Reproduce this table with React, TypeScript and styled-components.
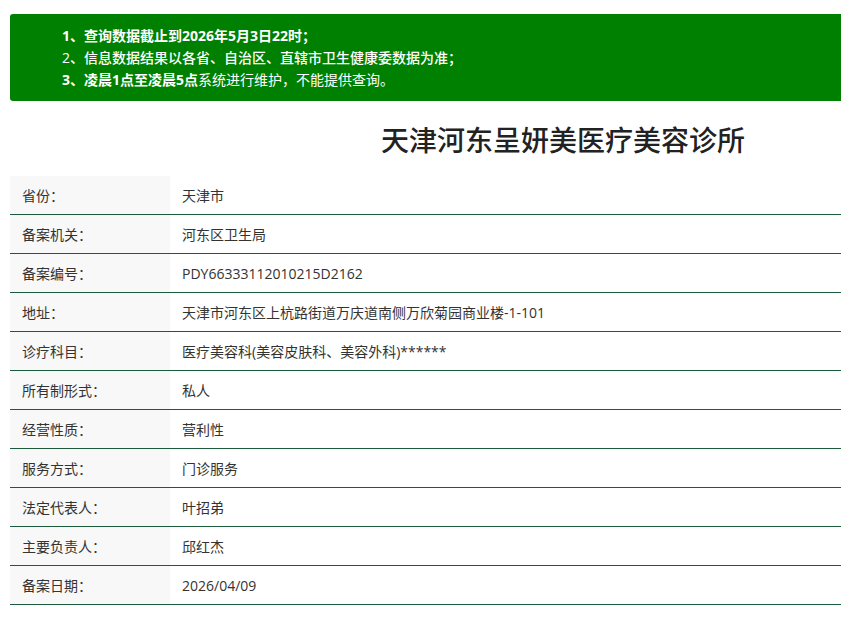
import React from "react";
import styled, { createGlobalStyle } from "styled-components";

const Global = createGlobalStyle`
  html, body { margin: 0; padding: 0; overflow: hidden; background: #fff; }
  body { font-family: "Open Sans", "Noto Sans CJK SC", sans-serif; color: #333; }
`;

const Page = styled.div`
  width: 1106px;
  padding: 14px 0 0 10px;
`;

const Notice = styled.ul`
  list-style: none;
  margin: 0;
  padding: 11px 0 10px 52px;
  background: #008000;
  border-radius: 3px;
  color: #fff;
  font-size: 14px;
  line-height: 22px;
`;

const NoticeItem = styled.li<{ $weight?: number }>`
  font-weight: ${(p) => p.$weight ?? 400};
`;

const Strong = styled.b`
  font-weight: 700;
`;

const Title = styled.h1`
  margin: 0;
  height: 75px;
  display: flex;
  align-items: center;
  justify-content: center;
  font-size: 28px;
  font-weight: 500;
  color: #222;
`;

const Table = styled.div`
  display: flex;
  flex-direction: column;
`;

const Row = styled.div`
  display: grid;
  grid-template-columns: 160px 1fr;
  height: 38px;
  border-bottom: 1px solid #1b5a3a;
  font-size: 14px;
`;

const Label = styled.div`
  background: #f8f8f8;
  padding-left: 12px;
  display: flex;
  align-items: center;
  color: #333;
`;

const Value = styled.div`
  padding-left: 12px;
  display: flex;
  align-items: center;
  color: #333;
`;

const rows: [string, string][] = [
  ["省份：", "天津市"],
  ["备案机关：", "河东区卫生局"],
  ["备案编号：", "PDY66333112010215D2162"],
  ["地址：", "天津市河东区上杭路街道万庆道南侧万欣菊园商业楼-1-101"],
  ["诊疗科目：", "医疗美容科(美容皮肤科、美容外科)******"],
  ["所有制形式：", "私人"],
  ["经营性质：", "营利性"],
  ["服务方式：", "门诊服务"],
  ["法定代表人：", "叶招弟"],
  ["主要负责人：", "邱红杰"],
  ["备案日期：", "2026/04/09"],
];

export default function App() {
  return (
    <>
      <Global />
      <Page>
        <Notice>
          <NoticeItem $weight={700}>1、查询数据截止到2026年5月3日22时；</NoticeItem>
          <NoticeItem $weight={500}>2、信息数据结果以各省、自治区、直辖市卫生健康委数据为准；</NoticeItem>
          <NoticeItem>
            <Strong>3、凌晨1点至凌晨5点</Strong>系统进行维护，不能提供查询。
          </NoticeItem>
        </Notice>
        <Title>天津河东呈妍美医疗美容诊所</Title>
        <Table>
          {rows.map(([l, v]) => (
            <Row key={l}>
              <Label>{l}</Label>
              <Value>{v}</Value>
            </Row>
          ))}
        </Table>
      </Page>
    </>
  );
}
